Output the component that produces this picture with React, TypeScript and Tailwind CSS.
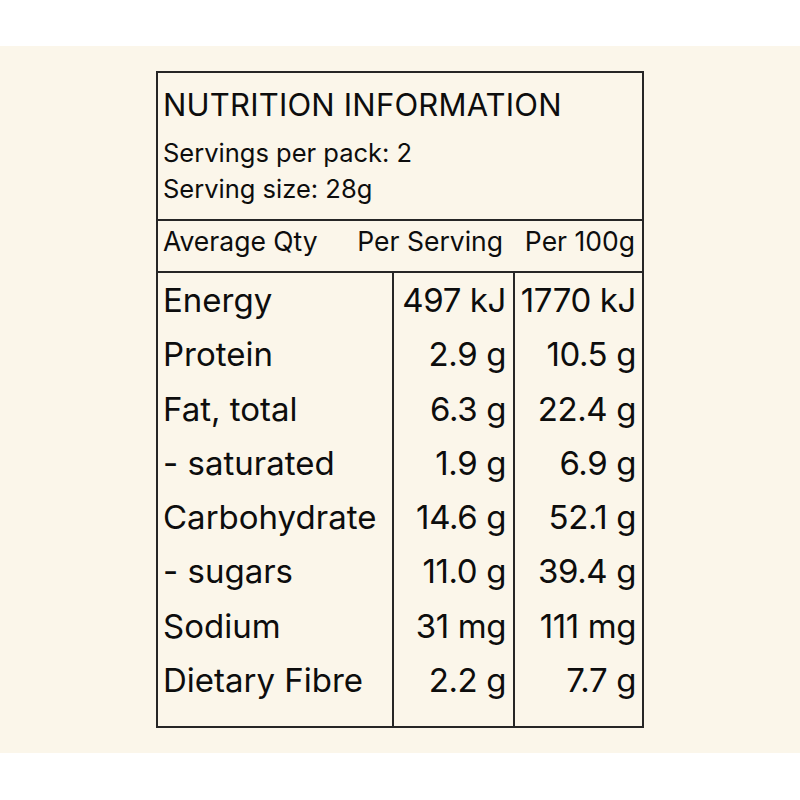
const rows = [
  { name: "Energy", serving: "497 kJ", per100: "1770 kJ" },
  { name: "Protein", serving: "2.9 g", per100: "10.5 g" },
  { name: "Fat, total", serving: "6.3 g", per100: "22.4 g" },
  { name: "- saturated", serving: "1.9 g", per100: "6.9 g" },
  { name: "Carbohydrate", serving: "14.6 g", per100: "52.1 g" },
  { name: "- sugars", serving: "11.0 g", per100: "39.4 g" },
  { name: "Sodium", serving: "31 mg", per100: "111 mg" },
  { name: "Dietary Fibre", serving: "2.2 g", per100: "7.7 g" },
];

export default function App() {
  return (
    <div className="w-[800px] h-[800px] bg-white pt-[46px] font-['Inter',sans-serif] text-[#0d0d0d]">
      <div className="h-[707px] bg-[#fbf6ea] pt-[25px]">
        {/* label box */}
        <div className="mx-auto w-[488px] border-2 border-[#262626]">
          {/* heading block */}
          <div className="px-[5px] pt-[14px] pb-[12px] border-b-2 border-[#262626]">
            <p className="text-[31px] leading-[36px] tracking-[0.2px] mb-[12px] whitespace-nowrap">
              NUTRITION INFORMATION
            </p>
            <p className="text-[25.5px] leading-[36px]">Servings per pack: 2</p>
            <p className="text-[25.5px] leading-[36px]">Serving size: 28g</p>
          </div>

          {/* column headers — no dividers here, "Per Serving" runs past the column line */}
          <div className="flex pt-[2px] pb-[12px] border-b-2 border-[#262626] text-[26.5px] leading-[36px]">
            <span className="flex-1 pl-[5px] whitespace-nowrap">Average Qty</span>
            <span className="pr-[8px] whitespace-nowrap">Per Serving</span>
            <span className="w-[131px] shrink-0 text-right pr-[7px] whitespace-nowrap">Per 100g</span>
          </div>

          {/* values */}
          <div className="grid grid-cols-[234px_121px_129px] text-[33px] leading-[54.3px]">
            <div className="pl-[5px] pb-[19px]">
              {rows.map((r) => (
                <p key={r.name} className="whitespace-nowrap">{r.name}</p>
              ))}
            </div>
            <div className="border-l-2 border-[#262626] text-right pr-[7px] tracking-[-0.4px]">
              {rows.map((r) => (
                <p key={r.name} className="whitespace-nowrap">{r.serving}</p>
              ))}
            </div>
            <div className="border-l-2 border-[#262626] text-right pr-[6px] tracking-[-0.4px]">
              {rows.map((r) => (
                <p key={r.name} className="whitespace-nowrap">{r.per100}</p>
              ))}
            </div>
          </div>
        </div>
      </div>
    </div>
  );
}
